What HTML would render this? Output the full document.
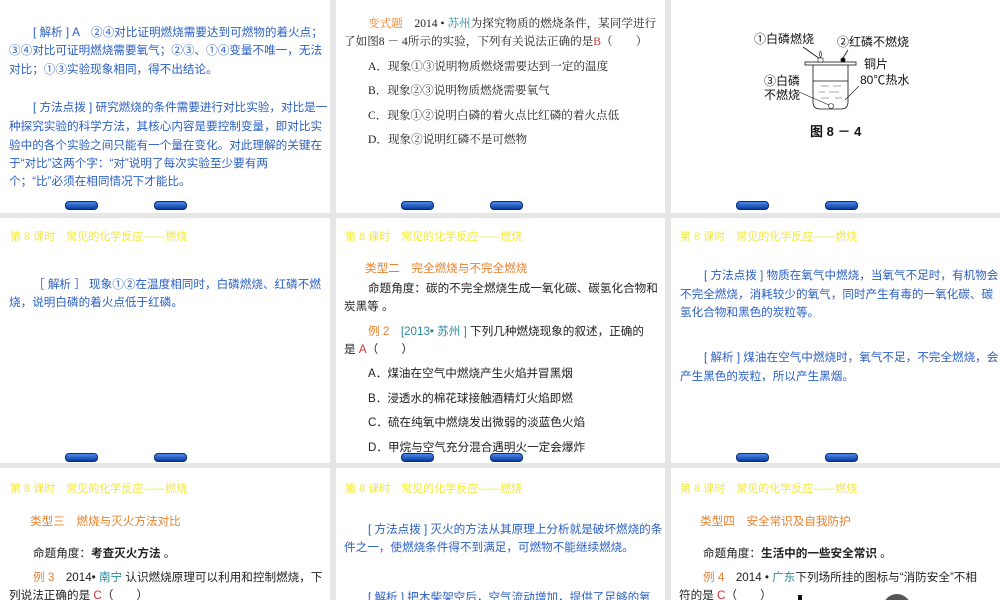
<!DOCTYPE html>
<html><head><meta charset="utf-8"><style>
body{margin:0;width:1000px;height:600px;background:#e6e6e6;position:relative;overflow:hidden;font-family:"Liberation Sans","Noto Sans CJK SC",sans-serif;}
.s{position:absolute;background:#fff;overflow:hidden}
.t{position:absolute;white-space:nowrap;font-size:11.6px;line-height:18.5px}
.b{color:#2a5fc4}.k{color:#222}.o{color:#e8812e}.y{color:#f2ea38;font-size:11px}.c{color:#2a8a9a}
.serif{font-family:"Liberation Serif","Noto Serif CJK SC",serif}
.btn{position:absolute;width:33px;height:9px;border-radius:4px;background:linear-gradient(#4a8ae8,#0b3a9e);box-sizing:border-box;border:1px solid #0a2c7a}
</style></head><body>
<!-- row1 -->
<div class="s" style="left:0;top:0;width:330px;height:213px">
<div class="t b" style="left:33px;top:24px">[ 解析 ] A　②④对比证明燃烧需要达到可燃物的着火点；</div>
<div class="t b" style="left:9px;top:42px">③④对比可证明燃烧需要氧气；②③、①④变量不唯一，无法</div>
<div class="t b" style="left:9px;top:61px">对比；①③实验现象相同，得不出结论。</div>
<div class="t b" style="left:33px;top:99px">[ 方法点拨 ] 研究燃烧的条件需要进行对比实验，对比是一</div>
<div class="t b" style="left:9px;top:118px">种探究实验的科学方法，其核心内容是要控制变量，即对比实</div>
<div class="t b" style="left:9px;top:137px">验中的各个实验之间只能有一个量在变化。对此理解的关键在</div>
<div class="t b" style="left:9px;top:155px">于“对比”这两个字：“对”说明了每次实验至少要有两</div>
<div class="t b" style="left:9px;top:173px">个；“比”必须在相同情况下才能比。</div>
<div class="btn" style="left:65px;top:201px"></div><div class="btn" style="left:154px;top:201px"></div>
</div>
<div class="s" style="left:336px;top:0;width:329px;height:213px">
<div class="t k serif" style="left:32px;top:15px"><span class="o">变式题</span>　2014 • <span class="c">苏州</span>为探究物质的燃烧条件，某同学进行</div>
<div class="t k serif" style="left:8px;top:33px">了如图8 － 4所示的实验，下列有关说法正确的是<span style="color:#c33">B</span>（　　）</div>
<div class="t k serif" style="left:32px;top:58px">A．现象①③说明物质燃烧需要达到一定的温度</div>
<div class="t k serif" style="left:32px;top:82px">B．现象②③说明物质燃烧需要氧气</div>
<div class="t k serif" style="left:32px;top:107px">C．现象①②说明白磷的着火点比红磷的着火点低</div>
<div class="t k serif" style="left:32px;top:131px">D．现象②说明红磷不是可燃物</div>
<div class="btn" style="left:65px;top:201px"></div><div class="btn" style="left:154px;top:201px"></div>
</div>
<div class="s" style="left:671px;top:0;width:329px;height:213px">
<svg width="329" height="150" style="position:absolute;left:0;top:0" font-size="12" font-family="Liberation Sans,Noto Sans CJK SC,sans-serif" fill="#111">
<text x="83" y="43">①白磷燃烧</text><text x="166" y="46">②红磷不燃烧</text>
<text x="193" y="68">铜片</text><text x="189" y="84">80℃热水</text>
<text x="93" y="85">③白磷</text><text x="93" y="99">不燃烧</text>
<line x1="132" y1="47" x2="149" y2="59" stroke="#111" stroke-width="0.8"/>
<line x1="177" y1="50" x2="172" y2="58" stroke="#111" stroke-width="0.8"/>
<rect x="134" y="62" width="51" height="3" fill="none" stroke="#111" stroke-width="0.8"/>
<path d="M142 65 V102 Q142 109 149 109 H170 Q177 109 177 102 V65" fill="none" stroke="#111" stroke-width="0.8"/>
<line x1="142" y1="81" x2="177" y2="81" stroke="#111" stroke-width="0.8"/>
<path d="M150 86h8M162 86h8M148 92h6M158 92h10M150 98h8M164 98h7" stroke="#555" stroke-width="0.6"/>
<rect x="147" y="58" width="5" height="4" fill="#fff" stroke="#111" stroke-width="0.6"/>
<path d="M149.5 58 q-2 -4 0 -7 q2 3 0 7" fill="none" stroke="#111" stroke-width="0.6"/>
<circle cx="172" cy="60" r="2.5"/>
<circle cx="160" cy="106" r="2.5" fill="#fff" stroke="#111" stroke-width="0.6"/>
<line x1="128" y1="92" x2="158" y2="105" stroke="#111" stroke-width="0.6"/>
<line x1="188" y1="86" x2="174" y2="100" stroke="#111" stroke-width="0.6"/>
<text x="139" y="136" font-weight="bold" font-size="13">图 8 － 4</text>
</svg>
<div class="btn" style="left:65px;top:201px"></div><div class="btn" style="left:154px;top:201px"></div>
</div>
<!-- row2 -->
<div class="s" style="left:0;top:218px;width:330px;height:245px">
<div class="t y" style="left:10px;top:10px">第 8 课时　常见的化学反应——燃烧</div>
<div class="t b" style="left:33px;top:58px">［ 解析 ］ 现象①②在温度相同时，白磷燃烧、红磷不燃</div>
<div class="t b" style="left:9px;top:76px">烧，说明白磷的着火点低于红磷。</div>
<div class="btn" style="left:65px;top:235px"></div><div class="btn" style="left:154px;top:235px"></div>
</div>
<div class="s" style="left:336px;top:218px;width:329px;height:245px">
<div class="t y" style="left:9px;top:10px">第 8 课时　常见的化学反应——燃烧</div>
<div class="t o" style="left:29px;top:42px">类型二　完全燃烧与不完全燃烧</div>
<div class="t k" style="left:32px;top:62px">命题角度：碳的不完全燃烧生成一氧化碳、碳氢化合物和</div>
<div class="t k" style="left:8px;top:80px">炭黑等 。</div>
<div class="t k" style="left:32px;top:105px"><span class="o">例 2</span>　<span class="c">[2013• 苏州 ]</span> 下列几种燃烧现象的叙述，正确的</div>
<div class="t k" style="left:8px;top:123px">是 <span style="color:#c33">A</span>（　　）</div>
<div class="t k" style="left:32px;top:147px">A．煤油在空气中燃烧产生火焰并冒黑烟</div>
<div class="t k" style="left:32px;top:172px">B．浸透水的棉花球接触酒精灯火焰即燃</div>
<div class="t k" style="left:32px;top:196px">C．硫在纯氧中燃烧发出微弱的淡蓝色火焰</div>
<div class="t k" style="left:32px;top:221px">D．甲烷与空气充分混合遇明火一定会爆炸</div>
<div class="btn" style="left:65px;top:235px"></div><div class="btn" style="left:154px;top:235px"></div>
</div>
<div class="s" style="left:671px;top:218px;width:329px;height:245px">
<div class="t y" style="left:9px;top:10px">第 8 课时　常见的化学反应——燃烧</div>
<div class="t b" style="left:33px;top:49px">[ 方法点拨 ] 物质在氧气中燃烧，当氧气不足时，有机物会</div>
<div class="t b" style="left:9px;top:68px">不完全燃烧，消耗较少的氧气，同时产生有毒的一氧化碳、碳</div>
<div class="t b" style="left:9px;top:86px">氢化合物和黑色的炭粒等。</div>
<div class="t b" style="left:33px;top:131px">[ 解析 ] 煤油在空气中燃烧时，氧气不足，不完全燃烧，会</div>
<div class="t b" style="left:9px;top:150px">产生黑色的炭粒，所以产生黑烟。</div>
<div class="btn" style="left:65px;top:235px"></div><div class="btn" style="left:154px;top:235px"></div>
</div>
<!-- row3 -->
<div class="s" style="left:0;top:468px;width:330px;height:132px">
<div class="t y" style="left:10px;top:12px">第 8 课时　常见的化学反应——燃烧</div>
<div class="t o" style="left:30px;top:45px">类型三　燃烧与灭火方法对比</div>
<div class="t k" style="left:33px;top:77px">命题角度：<b>考查灭火方法</b> 。</div>
<div class="t k" style="left:33px;top:101px"><span class="o">例 3</span>　2014• <span class="c">南宁</span> 认识燃烧原理可以利用和控制燃烧，下</div>
<div class="t k" style="left:9px;top:119px">列说法正确的是 <span style="color:#c33">C</span>（　　）</div>
</div>
<div class="s" style="left:336px;top:468px;width:329px;height:132px">
<div class="t y" style="left:9px;top:12px">第 8 课时　常见的化学反应——燃烧</div>
<div class="t b" style="left:32px;top:53px">[ 方法点拨 ] 灭火的方法从其原理上分析就是破坏燃烧的条</div>
<div class="t b" style="left:8px;top:71px">件之一，使燃烧条件得不到满足，可燃物不能继续燃烧。</div>
<div class="t b" style="left:32px;top:121px">[ 解析 ] 把木柴架空后，空气流动增加，提供了足够的氧</div>
</div>
<div class="s" style="left:671px;top:468px;width:329px;height:132px">
<div class="t y" style="left:9px;top:12px">第 8 课时　常见的化学反应——燃烧</div>
<div class="t o" style="left:29px;top:45px">类型四　安全常识及自我防护</div>
<div class="t k" style="left:32px;top:77px">命题角度：<b>生活中的一些安全常识</b> 。</div>
<div class="t k" style="left:32px;top:101px"><span class="o">例 4</span>　2014 • <span class="c">广东</span>下列场所挂的图标与“消防安全”不相</div>
<div class="t k" style="left:8px;top:119px">符的是 <span style="color:#c33">C</span>（　　）</div>
<div style="position:absolute;left:127px;top:127px;width:4px;height:6px;background:#111"></div>
<div style="position:absolute;left:212px;top:126px;width:28px;height:28px;border-radius:50%;background:#555"></div>
</div>
</body></html>
